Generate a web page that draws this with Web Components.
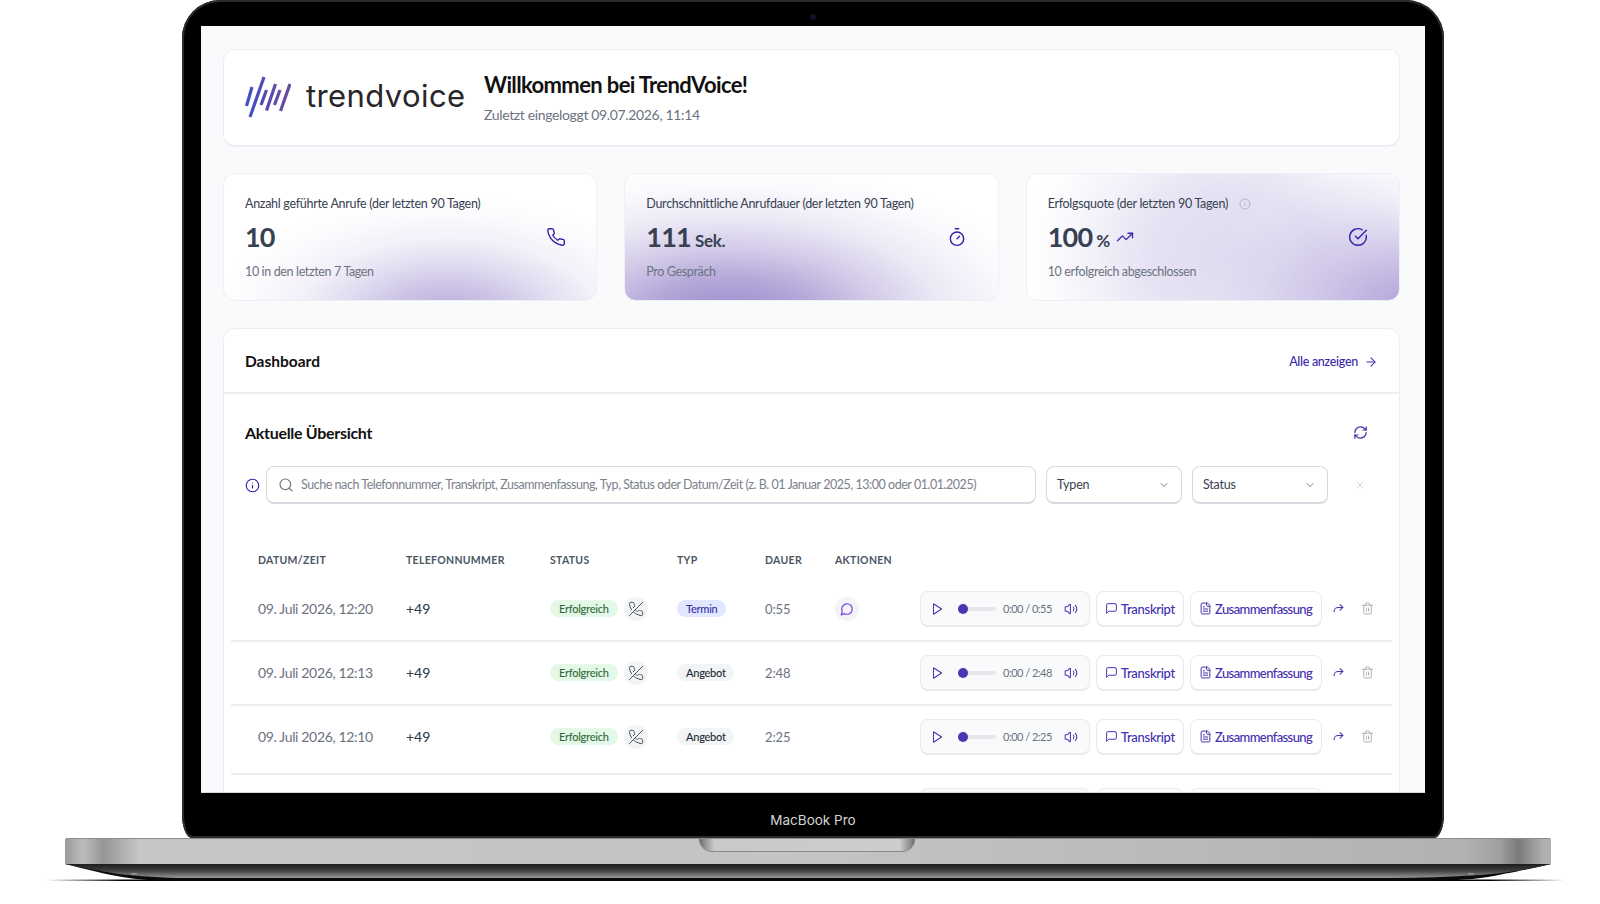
<!DOCTYPE html>
<html lang="de">
<head>
<meta charset="utf-8">
<title>TrendVoice</title>
<style>
  html, body { margin: 0; padding: 0; background: #fff; overflow: hidden; }
  body { font-family: Lato, "Liberation Sans", sans-serif; }
</style>
</head>
<body>
<tv-laptop>
  <tv-welcome></tv-welcome>
  <tv-stats>
    <tv-stat label="Anzahl geführte Anrufe (der letzten 90 Tagen)" value="10" note="10 in den letzten 7 Tagen" icon="phone" glow="one"></tv-stat>
    <tv-stat label="Durchschnittliche Anrufdauer (der letzten 90 Tagen)" value="111" unit="Sek." note="Pro Gespräch" icon="timer" glow="two"></tv-stat>
    <tv-stat label="Erfolgsquote (der letzten 90 Tagen)" value="100" unit="%" note="10 erfolgreich abgeschlossen" icon="check" glow="three" info trend></tv-stat>
  </tv-stats>
  <tv-panel>
    <tv-toolbar></tv-toolbar>
    <tv-head></tv-head>
    <tv-row date="09. Juli 2026, 12:20" type="Termin" dur="0:55" chat></tv-row>
    <tv-row date="09. Juli 2026, 12:13" type="Angebot" dur="2:48"></tv-row>
    <tv-row date="09. Juli 2026, 12:10" type="Angebot" dur="2:25" tail></tv-row>
    <tv-row stub></tv-row>
  </tv-panel>
</tv-laptop>

<script>
// icon paths, 24 box, stroke only
const ICONS = {
  phone: '<path d="M22 16.92v3a2 2 0 0 1-2.18 2 19.79 19.79 0 0 1-8.63-3.07 19.5 19.5 0 0 1-6-6 19.79 19.79 0 0 1-3.07-8.67A2 2 0 0 1 4.11 2h3a2 2 0 0 1 2 1.72 12.84 12.84 0 0 0 .7 2.81 2 2 0 0 1-.45 2.11L8.09 9.91a16 16 0 0 0 6 6l1.27-1.27a2 2 0 0 1 2.11-.45 12.84 12.84 0 0 0 2.81.7A2 2 0 0 1 22 16.92z"/>',
  phoneoff: '<path d="M10.68 13.31a16 16 0 0 0 3.41 2.6l1.27-1.27a2 2 0 0 1 2.11-.45 12.84 12.84 0 0 0 2.81.7 2 2 0 0 1 1.72 2v3a2 2 0 0 1-2.18 2 19.79 19.79 0 0 1-8.63-3.07 19.42 19.42 0 0 1-3.33-2.67m-2.67-3.34a19.79 19.79 0 0 1-3.07-8.63A2 2 0 0 1 4.11 2h3a2 2 0 0 1 2 1.72 12.84 12.84 0 0 0 .7 2.81 2 2 0 0 1-.45 2.11L8.09 9.91"/><path d="M22 2 2 22"/>',
  timer: '<path d="M10 2h4"/><path d="M12 14l3-3"/><circle cx="12" cy="14" r="8"/>',
  check: '<path d="M21.801 10A10 10 0 1 1 17 3.335"/><path d="m9 11 3 3L22 4"/>',
  trend: '<path d="M22 7l-8.500 8.500-5-5L2 17"/><path d="M16 7h6v6"/>',
  info: '<circle cx="12" cy="12" r="10"/><path d="M12 16v-4"/><path d="M12 8h.01"/>',
  arrow: '<path d="M5 12h14"/><path d="m12 5 7 7-7 7"/>',
  refresh: '<path d="M3 12a9 9 0 0 1 9-9 9.75 9.75 0 0 1 6.74 2.74L21 8"/><path d="M21 3v5h-5"/><path d="M21 12a9 9 0 0 1-9 9 9.75 9.75 0 0 1-6.74-2.74L3 16"/><path d="M8 16H3v5"/>',
  search: '<circle cx="11" cy="11" r="8"/><path d="m21 21-4.300-4.300"/>',
  chevron: '<path d="m6 9 6 6 6-6"/>',
  x: '<path d="M18 6 6 18"/><path d="m6 6 12 12"/>',
  play: '<path d="M6 3l14 9-14 9z"/>',
  volume: '<path d="M11 4.702a.705.705 0 0 0-1.203-.498L6.413 7.587A1.400 1.400 0 0 1 5.416 8H3a1 1 0 0 0-1 1v6a1 1 0 0 0 1 1h2.416a1.400 1.400 0 0 1 .997.413l3.383 3.384A.705.705 0 0 0 11 19.298z"/><path d="M16 9a5 5 0 0 1 0 6"/><path d="M19.364 18.364a9 9 0 0 0 0-12.728"/>',
  square: '<path d="M21 15a2 2 0 0 1-2 2H7l-4 4V5a2 2 0 0 1 2-2h14a2 2 0 0 1 2 2z"/>',
  bubble: '<path d="M7.900 20A9 9 0 1 0 4 16.100L2 22Z"/>',
  file: '<path d="M15 2H6a2 2 0 0 0-2 2v16a2 2 0 0 0 2 2h12a2 2 0 0 0 2-2V7Z"/><path d="M14 2v4a2 2 0 0 0 2 2h4"/><path d="M16 13H8"/><path d="M16 17H8"/><path d="M10 9H8"/>',
  share: '<path d="M20 10H11a7 7 0 0 0-7 7v1"/><path d="m15 5 5 5-5 5"/>',
  trash: '<path d="M3 6h18"/><path d="M19 6v14c0 1-1 2-2 2H7c-1 0-2-1-2-2V6"/><path d="M8 6V4c0-1 1-2 2-2h4c1 0 2 1 2 2v2"/><path d="M10 11v6"/><path d="M14 11v6"/>'
};

class TvIcon extends HTMLElement {
  connectedCallback() {
    const size = this.getAttribute('size') || 16;
    const sw = this.getAttribute('sw') || 2;
    this.attachShadow({ mode: 'open' }).innerHTML = `
      <style>:host { display: inline-flex; flex: none; width: ${size}px; height: ${size}px; } svg { display: block; }</style>
      <svg width="${size}" height="${size}" viewBox="0 0 24 24" fill="none" stroke="currentColor" stroke-width="${sw}" stroke-linecap="round" stroke-linejoin="round">${ICONS[this.getAttribute('name')]}</svg>`;
  }
}
customElements.define('tv-icon', TvIcon);

class TvLaptop extends HTMLElement {
  constructor() {
    super();
    this.attachShadow({ mode: 'open' }).innerHTML = `
    <style>
      :host { display: block; width: 1600px; height: 904px; font-family: Lato, "Liberation Sans", sans-serif; }
      #lid {
        box-sizing: border-box;
        position: relative;
        width: 1262px;
        height: 838px;
        margin-left: 182px;
        padding: 26px 19px 0 19px;
        background: #000;
        border-radius: 38px 38px 10px 10px / 38px 38px 24px 24px;
        box-shadow: inset 0 0 0 2px #2b2b2d;
        display: flex;
        flex-direction: column;
      }
      #cam { position: absolute; top: 14px; left: 628px; width: 6px; height: 6px; border-radius: 50%; background: #0e1626; }
      #screen {
        box-sizing: border-box;
        flex: none;
        height: 767px;
        padding: 23px 25px 0 22px;
        background: #f9fafb;
        border-bottom: 1px solid #d9d9dc;
        overflow: hidden;
        display: flex;
        flex-direction: column;
        gap: 27px;
      }
      ::slotted(*) { flex: none; }
      #brand { flex: 1; display: flex; align-items: center; justify-content: center; color: #d6d6d6; font: 13.500px "Inter", "Liberation Sans", sans-serif; padding-top: 9px; box-sizing: border-box; }
      #base {
        box-sizing: border-box;
        width: 1486px;
        height: 26px;
        margin-left: 65px;
        display: flex;
        justify-content: center;
        border-radius: 2px 2px 0 0;
        background: linear-gradient(90deg, #9a9a9a 0, #bdbdbd 1.2%, #969696 2.600%, #c6c6c6 5%, #c4c4c4 50%, #b2b2b2 94%, #a0a0a0 96.500%, #7a7a7a 97.800%, #b0b0b0 99.500%);
        border-top: 1px solid #8c8c8c;
      }
      #notch {
        width: 216px;
        height: 12px;
        border-radius: 0 0 16px 16px;
        background: linear-gradient(90deg, #6c6c6c 0, #c9c9c9 7%, #cdcdcd 93%, #6c6c6c 100%);
        border-bottom: 1px solid #8a8a8a;
        margin-left: -2px;
      }
      #under { display: block; }
    </style>
    <div id="lid">
      <div id="cam"></div>
      <div id="screen"><slot></slot></div>
      <div id="brand">MacBook Pro</div>
    </div>
    <div id="base"><div id="notch"></div></div>
    <svg id="under" width="1600" height="18" viewBox="0 0 1600 18">
      <defs>
        <linearGradient id="ug" x1="0" y1="0" x2="0" y2="1">
          <stop offset="0" stop-color="#1d1d1d"/><stop offset=".45" stop-color="#3c3c3c"/><stop offset="1" stop-color="#989898"/>
        </linearGradient>
        <linearGradient id="fl" x1="0" y1="0" x2="1" y2="0">
          <stop offset="0" stop-color="#000" stop-opacity="0"/><stop offset=".05" stop-color="#000"/><stop offset=".95" stop-color="#000"/><stop offset="1" stop-color="#000" stop-opacity="0"/>
        </linearGradient>
      </defs>
      <rect x="47" y="15.500" width="1518" height="1.500" fill="url(#fl)"/>
      <path d="M65 0 H1551 C1530 5 1505 10 1488 13 C1470 16 1440 17 1420 17 H180 C160 17 140 16 122 13 C105 10 85 5 65 0 Z" fill="#0a0a0a"/>
      <path d="M65 0 H1551 C1530 5 1505 9 1480 11 C1450 13 1420 14 1390 14 H190 C160 14 140 12 118 10 C100 7 85 4 65 0 Z" fill="url(#ug)"/>
      <rect x="131" y="9" width="6" height="2" fill="#8c8c8c"/>
      <rect x="1468" y="9" width="6" height="2" fill="#8c8c8c"/>
    </svg>`;
  }
}
customElements.define('tv-laptop', TvLaptop);

class TvWelcome extends HTMLElement {
  constructor() {
    super();
    this.attachShadow({ mode: 'open' }).innerHTML = `
    <style>
      :host {
        box-sizing: border-box;
        display: flex;
        align-items: center;
        height: 98px;
        margin-bottom: -1px;
        padding: 0 20px 0 21px;
        background: #fff;
        border: 1px solid #eceef1;
        border-bottom-width: 2px;
        border-radius: 12px;
      }
      #logo { display: flex; align-items: center; gap: 15px; width: 239px; margin-top: -1px; }
      #word { font: 400 31px Inter, "Liberation Sans", sans-serif; letter-spacing: .4px; color: #26262b; line-height: 1; padding-bottom: 4px; }
      h1 { margin: 0; font: 700 22px/26px Lato, sans-serif; color: #111; letter-spacing: -.63px; }
      p { margin: 8px 0 0; font: 400 14px/18px Lato, sans-serif; color: #6b7280; letter-spacing: -.35px; }
    </style>
    <div id="logo">
      <svg width="46" height="42" viewBox="0 0 46 42" fill="none" stroke-width="3.200">
        <defs><linearGradient id="lg" gradientUnits="userSpaceOnUse" x1="0" y1="0" x2="46" y2="0"><stop offset="0" stop-color="#3f50c4"/><stop offset="1" stop-color="#6c4a9f"/></linearGradient></defs>
        <g stroke="url(#lg)">
          <path d="M7 11 L1.500 30"/>
          <path d="M19 1 L5 41"/>
          <path d="M21.500 14 L16 29"/>
          <path d="M30.500 8 L21.500 34.500"/>
          <path d="M35 14 L29.500 29"/>
          <path d="M45 8 L35.500 35"/>
        </g>
      </svg>
      <span id="word">trendvoice</span>
    </div>
    <div>
      <h1>Willkommen bei TrendVoice!</h1>
      <p>Zuletzt eingeloggt 09.07.2026, 11:14</p>
    </div>`;
  }
}
customElements.define('tv-welcome', TvWelcome);

class TvStats extends HTMLElement {
  constructor() {
    super();
    this.attachShadow({ mode: 'open' }).innerHTML = `
    <style>:host { display: grid; grid-template-columns: repeat(3, 1fr); gap: 27px; }</style>
    <slot></slot>`;
  }
}
customElements.define('tv-stats', TvStats);

class TvStat extends HTMLElement {
  connectedCallback() {
    const a = n => this.getAttribute(n);
    const unit = a('unit') ? `<span id="unit">${a('unit')}</span>` : '';
    const trend = this.hasAttribute('trend') ? '<tv-icon id="trend" name="trend" size="18" sw="1.800"></tv-icon>' : '';
    const info = this.hasAttribute('info') ? '<tv-icon id="inf" name="info" size="12" sw="1.400"></tv-icon>' : '';
    this.attachShadow({ mode: 'open' }).innerHTML = `
    <style>
      :host {
        box-sizing: border-box;
        display: flex;
        align-items: center;
        justify-content: space-between;
        height: 128px;
        padding: 2px 31px 0 21px;
        border: 1px solid #eff0f3;
        border-radius: 12px;
        background-color: #fff;
      }
      :host([glow="one"]) { padding-right: 30px; }
      #ico { margin-bottom: 2px; color: #3420a8; }
      :host([glow="one"]) {
        background-image: radial-gradient(ellipse 235px 125px at 60% 115%, rgba(136,116,196,.62), rgba(136,116,196,.44) 25%, rgba(136,116,196,.25) 45%, rgba(136,116,196,.1) 65%, rgba(136,116,196,.03) 85%, rgba(136,116,196,0) 100%);
      }
      :host([glow="two"]) {
        background-image: radial-gradient(ellipse 330px 155px at 28% 115%, rgba(120,96,186,.75), rgba(120,96,186,.56) 25%, rgba(120,96,186,.33) 45%, rgba(120,96,186,.14) 65%, rgba(120,96,186,.04) 85%, rgba(120,96,186,0) 100%);
      }
      :host([glow="three"]) {
        background-image: radial-gradient(ellipse 200px 150px at 105% 110%, rgba(120,96,190,.6), rgba(120,96,190,.4) 30%, rgba(120,96,190,.2) 55%, rgba(120,96,190,.06) 80%, rgba(120,96,190,0) 100%),
          radial-gradient(ellipse 210px 170px at 55% 65%, rgba(150,134,205,.3), rgba(150,134,205,.24) 40%, rgba(150,134,205,.12) 65%, rgba(150,134,205,.03) 88%, rgba(150,134,205,0) 100%);
      }
      #label { display: flex; align-items: center; gap: 11px; font: 400 12.500px/16px Lato, sans-serif; letter-spacing: -.29px; color: #374151; }
      #inf { color: #9ca3af; }
      #val { display: flex; align-items: baseline; gap: 4px; margin: 8px 0 10px; height: 34px; font: 700 27px/34px Lato, sans-serif; letter-spacing: -.8px; color: #374151; }
      #unit { font-size: 17px; letter-spacing: -.3px; }
      #trend { color: #3b28a8; align-self: center; margin-left: 2px; }
      #note { font: 400 12.500px/16px Lato, sans-serif; letter-spacing: -.36px; color: #6b7280; }
    </style>
    <div>
      <div id="label">${a('label')}${info}</div>
      <div id="val">${a('value')}${unit}${trend}</div>
      <div id="note">${a('note')}</div>
    </div>
    <tv-icon id="ico" name="${a('icon')}" size="20" sw="1.700"></tv-icon>`;
  }
}
customElements.define('tv-stat', TvStat);

class TvPanel extends HTMLElement {
  constructor() {
    super();
    this.attachShadow({ mode: 'open' }).innerHTML = `
    <style>
      :host {
        display: block;
        box-sizing: border-box;
        background: #fff;
        border: 1px solid #eceef1;
        border-radius: 12px;
        height: 560px;
        --cols: 148px 144px 127px 88px 70px 85px 1fr;
      }
      #top {
        box-sizing: border-box;
        height: 65px;
        padding: 0 21px;
        display: flex;
        align-items: center;
        justify-content: space-between;
        border-bottom: 2px solid #edeef1;
      }
      h2 { margin: 0; font: 700 15.500px/20px Lato, sans-serif; color: #111; }
      a { display: flex; align-items: center; gap: 6px; padding-top: 2px; font: 500 12.500px/16px Lato, sans-serif; letter-spacing: -.3px; color: #3b28a8; text-decoration: none; }
      #body { padding: 0 7px; }
    </style>
    <div id="top">
      <h2>Dashboard</h2>
      <a href="#">Alle anzeigen <tv-icon name="arrow" size="14" sw="1.800"></tv-icon></a>
    </div>
    <div id="body"><slot></slot></div>`;
  }
}
customElements.define('tv-panel', TvPanel);

class TvSelect extends HTMLElement {
  connectedCallback() {
    this.attachShadow({ mode: 'open' }).innerHTML = `
    <style>
      :host {
        box-sizing: border-box;
        display: flex;
        align-items: center;
        justify-content: space-between;
        width: 136px;
        height: 38px;
        padding: 0 11px 0 10px;
        background: #fff;
        border: 1px solid #d7dae0;
        border-bottom-width: 2px;
        border-radius: 8px;
        font: 400 12.500px Lato, sans-serif;
        letter-spacing: -.2px;
        color: #374151;
      }
      tv-icon { color: #6b7280; }
    </style>
    ${this.getAttribute('label')}<tv-icon name="chevron" size="12" sw="1.800"></tv-icon>`;
  }
}
customElements.define('tv-select', TvSelect);

class TvToolbar extends HTMLElement {
  constructor() {
    super();
    this.attachShadow({ mode: 'open' }).innerHTML = `
    <style>
      :host { display: block; padding: 0 13px 0 14px; }
      #title { display: flex; align-items: center; justify-content: space-between; height: 67px; margin-top: 5px; padding-right: 11px; }
      h3 { margin: 0; font: 700 16px/20px Lato, sans-serif; letter-spacing: -.3px; color: #111; }
      #refresh { color: #3b28a8; }
      #bar { display: flex; align-items: center; gap: 10px; height: 38px; }
      #inf { color: #3420a8; margin-right: -4px; }
      #search {
        box-sizing: border-box;
        flex: none;
        width: 770px;
        height: 38px;
        display: flex;
        align-items: center;
        gap: 7px;
        padding: 0 11px;
        background: #fff;
        border: 1px solid #d7dae0;
        border-bottom-width: 2px;
        border-radius: 8px;
        font: 400 12.500px Lato, sans-serif;
        letter-spacing: -.46px;
        color: #7b818c;
        white-space: nowrap;
      }
      #search tv-icon { color: #6b7280; }
      #clear { color: #c7cad0; margin-left: 16px; }
    </style>
    <div id="title"><h3>Aktuelle Übersicht</h3><tv-icon id="refresh" name="refresh" size="15" sw="1.900"></tv-icon></div>
    <div id="bar">
      <tv-icon id="inf" name="info" size="15" sw="1.800"></tv-icon>
      <div id="search"><tv-icon name="search" size="16" sw="1.700"></tv-icon>Suche nach Telefonnummer, Transkript, Zusammenfassung, Typ, Status oder Datum/Zeit (z. B. 01 Januar 2025, 13:00 oder 01.01.2025)</div>
      <tv-select label="Typen"></tv-select>
      <tv-select label="Status"></tv-select>
      <tv-icon id="clear" name="x" size="12" sw="1.600"></tv-icon>
    </div>`;
  }
}
customElements.define('tv-toolbar', TvToolbar);

class TvHead extends HTMLElement {
  constructor() {
    super();
    this.attachShadow({ mode: 'open' }).innerHTML = `
    <style>
      :host {
        display: grid;
        grid-template-columns: var(--cols);
        align-items: center;
        height: 73.500px;
        padding: 39px 0 0 27px;
        box-sizing: border-box;
        font: 700 10.500px/14px Lato, sans-serif;
        letter-spacing: .3px;
        color: #4b5563;
        white-space: nowrap;
      }
    </style>
    <div>DATUM/ZEIT</div><div>TELEFONNUMMER</div><div>STATUS</div><div>TYP</div><div>DAUER</div><div>AKTIONEN</div>`;
  }
}
customElements.define('tv-head', TvHead);

class TvPlayer extends HTMLElement {
  connectedCallback() {
    const dur = this.getAttribute('dur');
    this.attachShadow({ mode: 'open' }).innerHTML = `
    <style>
      :host {
        box-sizing: border-box;
        display: flex;
        align-items: center;
        width: 170px;
        height: 36px;
        margin-right: -1px;
        padding: 1px 10px 0 9px;
        background: #f9fafb;
        border: 1px solid #e8eaee;
        border-bottom-width: 2px;
        border-radius: 8px;
        color: #4c35b0;
      }
      #track { width: 38px; height: 4px; margin-left: 14px; border-radius: 2px; background: #e5e7eb; position: relative; }
      #thumb { position: absolute; left: 0; top: -3px; width: 10px; height: 10px; border-radius: 50%; background: #4c35b0; }
      #time { margin-left: 7px; width: 61px; font: 400 11px Lato, sans-serif; letter-spacing: -.5px; color: #6b7280; white-space: nowrap; }
    </style>
    <tv-icon name="play" size="14" sw="1.800"></tv-icon>
    <div id="track"><div id="thumb"></div></div>
    <div id="time">0:00 / ${dur}</div>
    <tv-icon name="volume" size="14" sw="1.800"></tv-icon>`;
  }
}
customElements.define('tv-player', TvPlayer);

class TvBtn extends HTMLElement {
  connectedCallback() {
    this.attachShadow({ mode: 'open' }).innerHTML = `
    <style>
      :host {
        box-sizing: border-box;
        display: flex;
        align-items: center;
        gap: 3px;
        height: 36px;
        padding: 1px 0 0 8px;
        background: #fff;
        border: 1px solid #e8eaee;
        border-bottom-width: 2px;
        border-radius: 8px;
        font: 500 13px Lato, sans-serif;
        letter-spacing: ${this.getAttribute('ls') || 0}px;
        color: #3f2fb0;
        white-space: nowrap;
      }
    </style>
    <tv-icon name="${this.getAttribute('icon')}" size="13" sw="1.800"></tv-icon><slot></slot>`;
  }
}
customElements.define('tv-btn', TvBtn);

class TvRow extends HTMLElement {
  connectedCallback() {
    const a = n => this.getAttribute(n);
    const root = this.attachShadow({ mode: 'open' });
    const style = `
    <style>
      :host {
        box-sizing: border-box;
        display: grid;
        grid-template-columns: var(--cols);
        align-items: center;
        height: 64px;
        padding-left: 27px;
        border-bottom: 2px solid #edeef1;
        font: 400 14px Lato, sans-serif;
        white-space: nowrap;
      }
      :host([tail]) { height: 69px; padding-bottom: 5px; }
      :host([stub]) { border: 0; padding-top: 13px; height: 50px; align-items: start; }
      #date { color: #6b7280; font-size: 14px; letter-spacing: -.35px; }
      #phone { color: #374151; font-weight: 500; }
      #status, #type { display: flex; align-items: center; gap: 6px; }
      .pill { display: inline-block; height: 17px; line-height: 17px; padding: 0 9px; border-radius: 9px; font-size: 11px; font-weight: 500; letter-spacing: -.25px; }
      #ok { background: #e4f8e8; color: #2f6b3a; }
      .Termin { background: #e0e7ff; color: #3730a3; }
      .Angebot { background: #f3f4f6; color: #1f2937; padding-right: 8px; }
      .round { display: flex; align-items: center; justify-content: center; width: 24px; height: 24px; border-radius: 50%; background: #f3f4f6; }
      #off { color: #4b5563; }
      #dur { color: #6b7280; font-size: 13px; letter-spacing: -.1px; }
      #chat { color: #7c3aed; }
      #act { display: flex; align-items: center; gap: 7px; }
      #act tv-btn:nth-of-type(1) { width: 88px; }
      #act tv-btn:nth-of-type(2) { width: 132px; margin-left: -1px; }
      #share { color: #4c35b0; margin-left: 3px; }
      #trash { color: #a3a8b1; margin-left: 9px; }
      #spacer { grid-column: 1 / 7; }
    </style>`;
    if (this.hasAttribute('stub')) {
      // nur die Oberkante ist im Bild zu sehen
      root.innerHTML = style + `<div id="spacer"></div>
      <div id="act">
        <div style="box-sizing:border-box;width:170px;height:36px;margin-right:-1px;background:#f9fafb;border:1px solid #e8eaee;border-radius:8px"></div>
        <div style="box-sizing:border-box;width:88px;height:36px;border:1px solid #e8eaee;border-radius:8px"></div>
        <div style="box-sizing:border-box;width:132px;height:36px;margin-left:-1px;border:1px solid #e8eaee;border-radius:8px"></div>
      </div>`;
      return;
    }
    const chat = this.hasAttribute('chat') ? '<div class="round" id="chat"><tv-icon name="bubble" size="14" sw="2"></tv-icon></div>' : '<div></div>';
    root.innerHTML = style + `
      <div id="date">${a('date')}</div>
      <div id="phone">+49</div>
      <div id="status"><span class="pill" id="ok">Erfolgreich</span><div class="round" id="off"><tv-icon name="phoneoff" size="16" sw="1.500"></tv-icon></div></div>
      <div id="type"><span class="pill ${a('type')}">${a('type')}</span></div>
      <div id="dur">${a('dur')}</div>
      ${chat}
      <div id="act">
        <tv-player dur="${a('dur')}"></tv-player>
        <tv-btn icon="square" ls="-.3">Transkript</tv-btn>
        <tv-btn icon="file" ls="-.6">Zusammenfassung</tv-btn>
        <tv-icon id="share" name="share" size="13" sw="2"></tv-icon>
        <tv-icon id="trash" name="trash" size="13" sw="1.700"></tv-icon>
      </div>`;
  }
}
customElements.define('tv-row', TvRow);
</script>
</body>
</html>
